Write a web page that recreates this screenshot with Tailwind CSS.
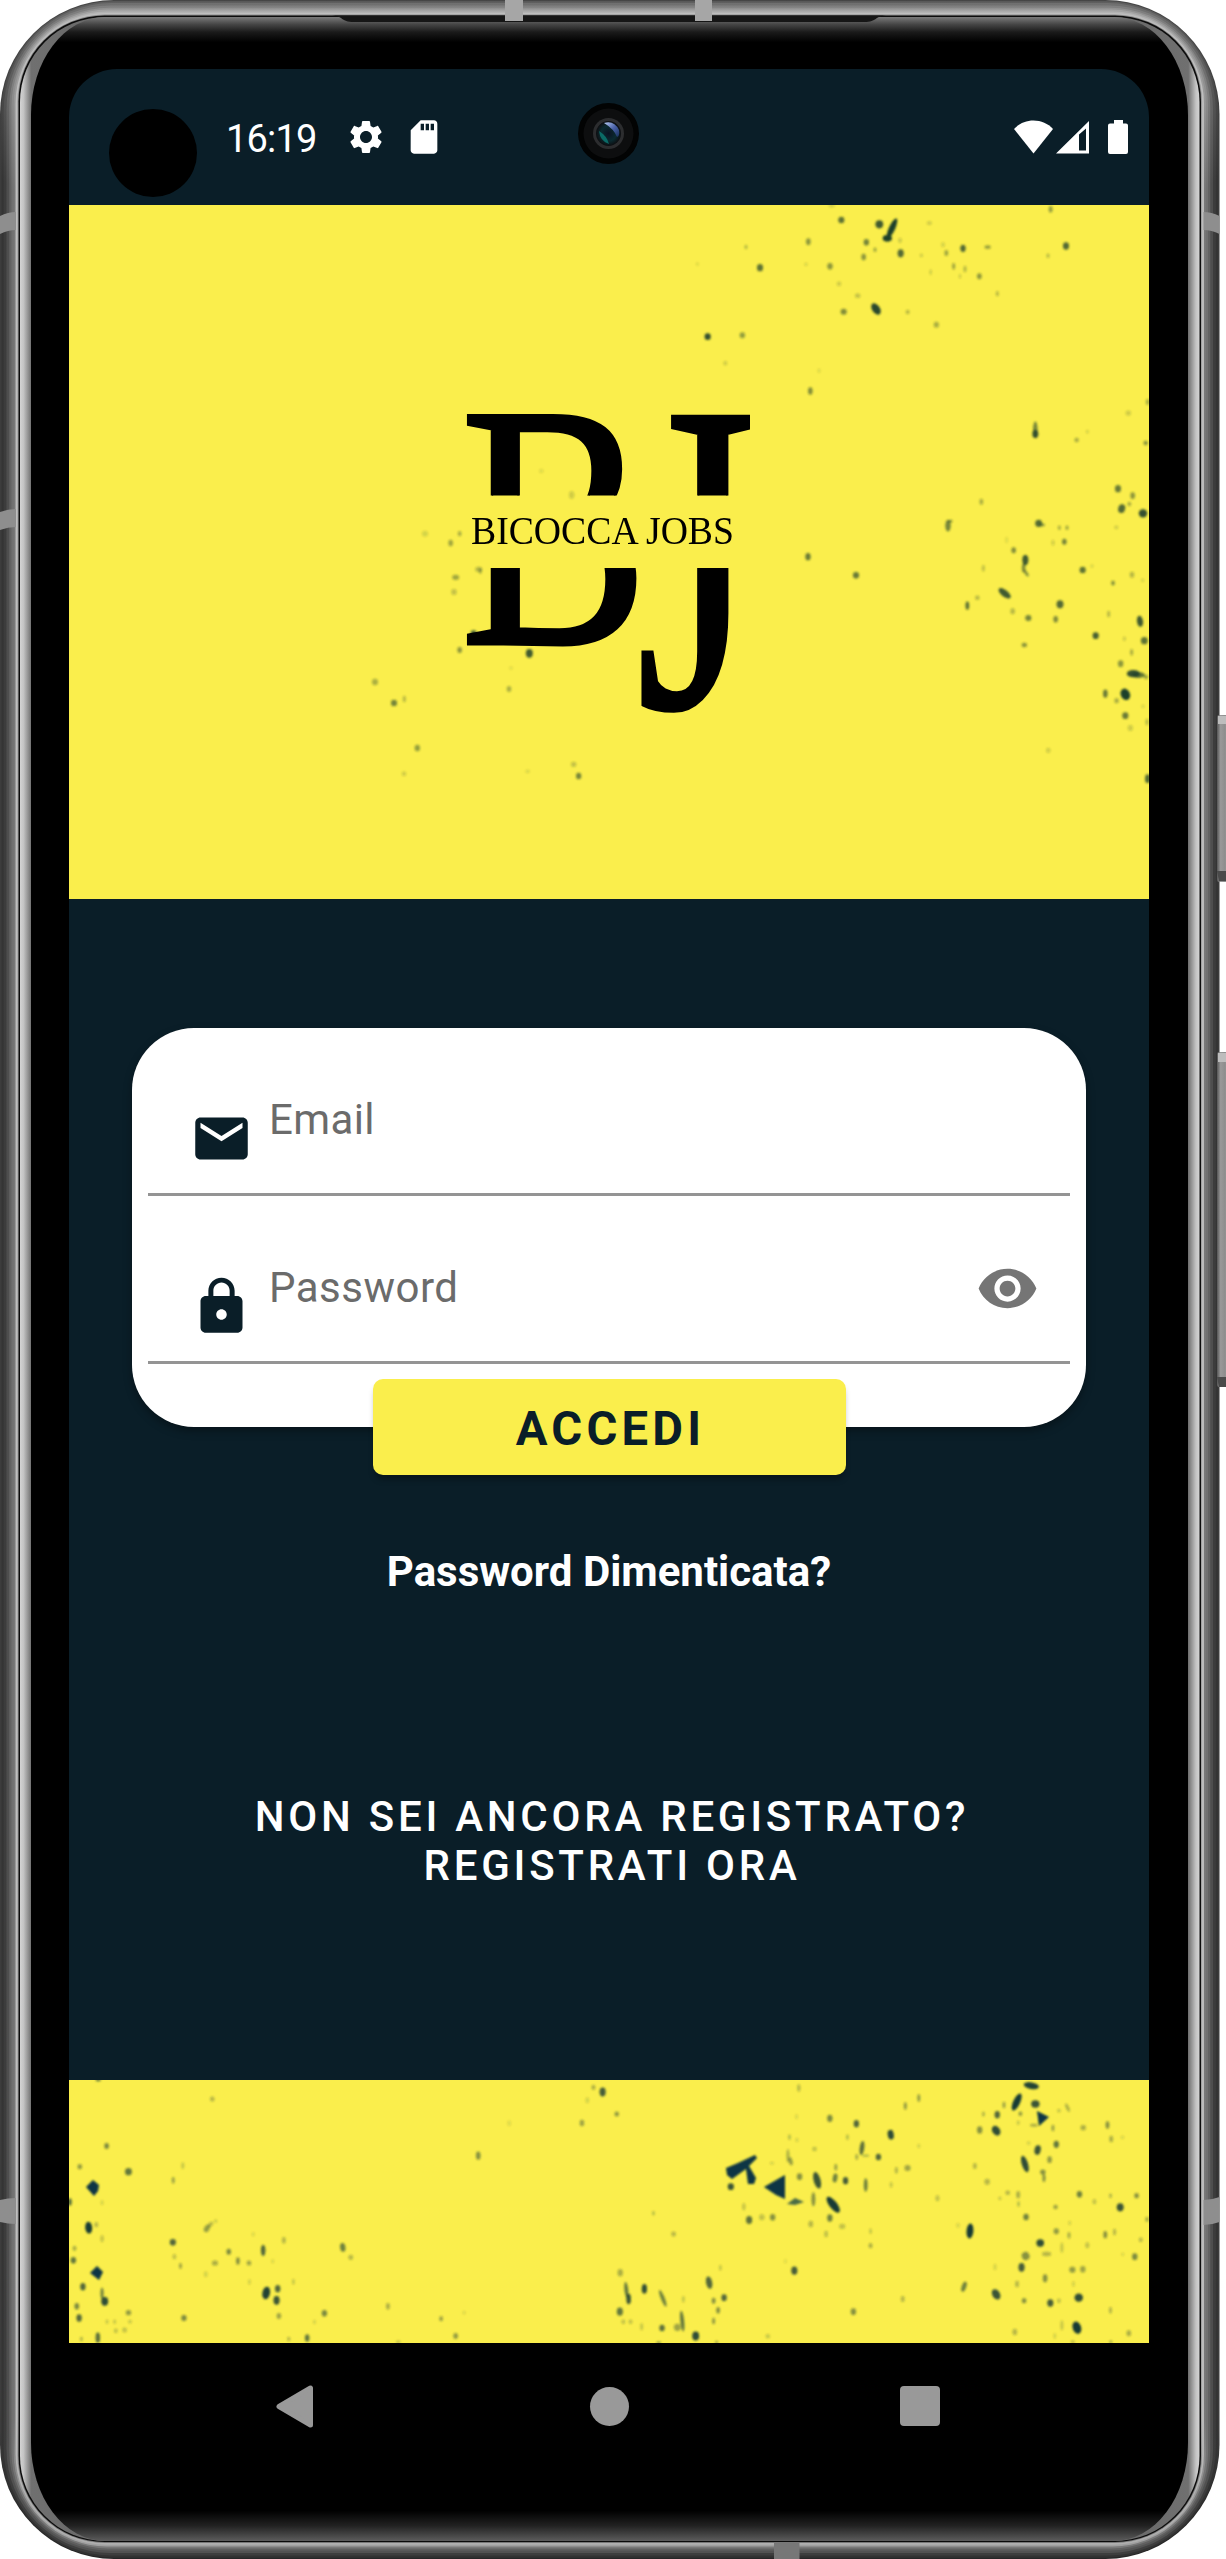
<!DOCTYPE html>
<html lang="it">
<head>
<meta charset="utf-8">
<title>Bicocca Jobs</title>
<script src="https://cdn.jsdelivr.net/npm/@tailwindcss/browser@4"></script>
</head>
<body class="bg-white font-[Roboto,sans-serif]">
<div class="relative w-[1226px] h-[2559px] overflow-hidden">

  <!-- Device frame -->
  <svg class="absolute inset-0" width="1226" height="2559" viewBox="0 0 1226 2559">
    <defs>
      <linearGradient id="rim" x1="20" x2="1199.5" y1="0" y2="0" gradientUnits="userSpaceOnUse">
        <stop offset="0" stop-color="#d4d4d4"/><stop offset=".003" stop-color="#c4c4c4"/><stop offset=".0095" stop-color="#707070"/>
        <stop offset=".5" stop-color="#333"/>
        <stop offset=".9905" stop-color="#707070"/><stop offset=".997" stop-color="#c4c4c4"/><stop offset="1" stop-color="#d4d4d4"/>
      </linearGradient>
      <linearGradient id="glass" x1="0" x2="0" y1="17" y2="2541" gradientUnits="userSpaceOnUse">
        <stop offset="0" stop-color="#7a7a7a"/><stop offset=".003" stop-color="#444"/><stop offset=".006" stop-color="#1a1a1a"/><stop offset=".010" stop-color="#000"/>
        <stop offset=".988" stop-color="#000"/><stop offset=".994" stop-color="#222"/><stop offset="1" stop-color="#5c5c5c"/>
      </linearGradient>
      <linearGradient id="key" x1="0" x2="1" y1="0" y2="0">
        <stop offset="0" stop-color="#555"/><stop offset=".3" stop-color="#999"/><stop offset=".7" stop-color="#8c8c8c"/><stop offset=".8" stop-color="#c8c8c8"/><stop offset="1" stop-color="#a8a8a8"/>
      </linearGradient>
    </defs>
    <g id="rings"></g>
    <rect x="18.5" y="15.5" width="1182.5" height="2526.5" rx="86" fill="#0c0c0c"/>
    <rect x="20" y="17" width="1179.5" height="2524" rx="85" fill="url(#rim)"/>
    <rect x="31" y="17" width="1157" height="2524" rx="74" ry="98" fill="url(#glass)"/>
    <path d="M332 15.500C344 16 340 22 354 22H864C878 22 874 16 886 15.500Z" fill="#161616"/>
    <g fill="#a6a6a6">
      <path d="M505 0h18v21h-18zM695 0h17v21h-17z"/>
      <path d="M0 216q8-4 16-4v18q-8 0-16 4zM0 512q8-3 16-3v18q-8 0-16 3zM0 2200q8-2 16-2v26q-8 0-16-2z" fill="#8e8e8e"/>
      <path d="M1219.500 216q-8-4-16-4v18q8 0 16 4zM1219.500 2197q-8 3-16 3v25q8 0 16-3z" fill="#8e8e8e"/>
      <path d="M774 2542h25.500v17H774z" fill="#777"/>
    </g>
    <rect x="1217" y="715" width="12" height="167" rx="2" fill="url(#key)"/>
    <path d="M1217 871h9v10h-7z" fill="#4a4a4a"/><path d="M1218 716h8v8h-8z" fill="#bdbdbd"/>
    <rect x="1217" y="1052" width="12" height="335" rx="2" fill="url(#key)"/>
    <path d="M1217 1377h9v10h-7z" fill="#4a4a4a"/><path d="M1218 1053h8v9h-8z" fill="#bdbdbd"/>
  </svg>

  <!-- Screen -->
  <main class="relative mt-[69px] ml-[69px] w-[1080px] h-[2400px] flex flex-col rounded-t-[48px] overflow-hidden bg-[#0a1e28]">

    <header class="relative flex items-center h-[136px] shrink-0 pl-10 pr-[21px] text-white">
      <div class="size-[88px] rounded-full bg-black mt-[31px]"></div>
      <span class="ml-[29px] mt-[3px] w-[120px] text-[38px] leading-none tracking-[-0.8px]">16:19</span>
      <svg class="size-10" viewBox="0 0 24 24" fill="currentColor"><path d="M19.140 12.940c.040-.300.060-.610.060-.940 0-.320-.020-.640-.070-.940l2.030-1.580c.180-.140.230-.410.120-.610l-1.920-3.320c-.120-.220-.370-.290-.590-.220l-2.390.960c-.500-.380-1.030-.700-1.620-.940L14.400 2.810c-.040-.240-.240-.410-.480-.410h-3.840c-.240 0-.430.170-.470.410l-.360 2.540c-.590.240-1.130.570-1.620.940l-2.390-.960c-.220-.080-.470 0-.590.220L2.740 8.870c-.120.210-.080.470.120.610l2.030 1.580c-.050.300-.090.630-.090.940s.020.640.070.940l-2.030 1.580c-.180.140-.230.410-.120.610l1.920 3.320c.120.220.370.290.590.220l2.390-.960c.500.380 1.030.700 1.620.940l.360 2.540c.050.240.240.410.480.410h3.840c.240 0 .440-.170.470-.410l.360-2.540c.590-.240 1.130-.560 1.620-.940l2.390.960c.220.080.470 0 .590-.220l1.920-3.320c.120-.220.070-.470-.120-.610l-2.010-1.580zM12 15.600c-1.980 0-3.600-1.620-3.600-3.600s1.620-3.600 3.600-3.600 3.600 1.620 3.600 3.600-1.620 3.600-3.600 3.600z"/></svg>
      <svg class="size-10 ml-[18px]" viewBox="0 0 24 24" fill="currentColor"><path d="M18 2h-8L4.020 8 4 20c0 1.100.900 2 2 2h12c1.100 0 2-.900 2-2V4c0-1.100-.900-2-2-2zm-6 6h-2V4h2v4zm3 0h-2V4h2v4zm3 0h-2V4h2v4z"/></svg>
      <svg class="ml-auto" width="39" height="34" viewBox="0 0 39 34" fill="currentColor"><path d="M0 9C5 3.500 12 0.500 19.500 0.500S34 3.500 39 9L19.500 33.500Z"/></svg>
      <svg class="ml-[3px]" width="33" height="34" viewBox="0 0 33 34" fill="currentColor"><path fill-rule="evenodd" d="M0 33.500 33 1V33.500ZM23 14.500V30.500H30V8.500Z"/></svg>
      <svg class="ml-[19px]" width="20" height="34" viewBox="0 0 20 34" fill="currentColor"><path d="M6 0h9v3.500h3q2 0 2 2V32q0 2-2 2H2q-2 0-2-2V5.500q0-2 2-2h4z"/></svg>
      <svg class="absolute left-[509px] top-[34px]" width="61" height="61" viewBox="0 0 61 61">
        <defs>
          <radialGradient id="lens"><stop offset="0" stop-color="#0b1222"/><stop offset=".6" stop-color="#0a2a30"/><stop offset="1" stop-color="#0d0d10"/></radialGradient>
          <linearGradient id="glint" x1="0" y1="0" x2="1" y2="1"><stop offset="0" stop-color="#b9cdf5"/><stop offset=".5" stop-color="#4b62a8"/><stop offset="1" stop-color="#17305c"/></linearGradient>
        </defs>
        <circle cx="30.500" cy="30.500" r="30.500" fill="#020303"/>
        <circle cx="30.500" cy="30.500" r="25" fill="#0d0e0f"/>
        <circle cx="30.500" cy="30.500" r="15.500" fill="#2c2d2f"/>
        <circle cx="30.500" cy="30.500" r="12.500" fill="url(#lens)"/>
        <path d="M26 20Q36 17 41 27 42 33 39 34 36 26 26 20Z" fill="url(#glint)"/>
        <path d="M21 28Q22 38 31 41 29 33 21 28Z" fill="#0b6a66"/>
      </svg>
    </header>

    <section class="relative h-[694px] shrink-0 bg-[#faee4c]">
      <svg class="absolute inset-0" width="1080" height="694" viewBox="69 205 1080 694">
        <defs><filter id="soft"><feGaussianBlur stdDeviation=".8"/></filter></defs>
        <g id="specksTop" fill="#1d3f2b" filter="url(#soft)"></g>
      </svg>
      <!-- Logo: monogram split by the name -->
      <svg class="relative left-0 ml-[391px] top-[204px]" width="290" height="310" viewBox="460 409 290 310" fill="#000">
        <defs><clipPath id="split"><path d="M460 409H750V495.500H460ZM460 568H750V719H460Z"/></clipPath></defs>
        <g clip-path="url(#split)">
          <text class="font-['Liberation_Serif']" transform="translate(460 644) scale(.812 1)" font-size="349" stroke="#000" stroke-width="3">B</text>
          <text class="font-['Liberation_Serif']" transform="translate(636 707) scale(.700 1)" font-size="444" stroke="#000" stroke-width="3">J</text>
        </g>
        <text class="font-['Liberation_Serif']" x="471" y="544" font-size="41" textLength="263" lengthAdjust="spacingAndGlyphs">BICOCCA JOBS</text>
      </svg>
    </section>

    <section class="flex flex-col h-[1181px] shrink-0 text-white">
      <div class="mt-[129px] mx-[63px] h-[399px] shrink-0 px-4 rounded-[62px] bg-white shadow-[0_4px_8px_rgba(0,0,0,0.35)] text-[#6b6b6b]">
        <label class="flex items-start h-[168px] pl-[42px] border-b-[3px] border-[#949494]">
          <svg class="size-[63px] mt-[79px]" viewBox="0 0 24 24" fill="#0a1e28"><path d="M20 4H4c-1.100 0-1.990.900-1.990 2L2 18c0 1.100.900 2 2 2h16c1.100 0 2-.900 2-2V6c0-1.100-.900-2-2-2zm0 4l-8 5-8-5V6l8 5 8-5v2z"/></svg>
          <span class="ml-4 mt-[67px] text-[42px] leading-[50px] tracking-[0.4px]">Email</span>
        </label>
        <label class="flex items-start h-[168px] pl-[42px] pr-[31px] border-b-[3px] border-[#949494]">
          <svg class="size-[63px] mt-[79px]" viewBox="0 0 24 24" fill="#0a1e28"><path d="M18 8h-1V6c0-2.760-2.240-5-5-5S7 3.240 7 6v2H6c-1.100 0-2 .900-2 2v10c0 1.100.900 2 2 2h12c1.100 0 2-.900 2-2V10c0-1.100-.900-2-2-2zm-6 9c-1.100 0-2-.900-2-2s.900-2 2-2 2 .900 2 2-.900 2-2 2zm3.100-9H8.900V6c0-1.710 1.390-3.100 3.100-3.100s3.100 1.390 3.100 3.100v2z"/></svg>
          <span class="ml-4 mt-[67px] text-[42px] leading-[50px] tracking-[0.5px]">Password</span>
          <svg class="size-[63px] ml-auto mt-[61px]" viewBox="0 0 24 24" fill="#757575"><path d="M12 4.500C7 4.500 2.730 7.610 1 12c1.730 4.390 6 7.500 11 7.500s9.270-3.110 11-7.500c-1.730-4.390-6-7.500-11-7.500zM12 17c-2.760 0-5-2.240-5-5s2.240-5 5-5 5 2.240 5 5-2.240 5-5 5zm0-8c-1.660 0-3 1.340-3 3s1.340 3 3 3 3-1.340 3-3-1.340-3-3-3z"/></svg>
        </label>
      </div>
      <button class="relative -mt-12 mx-auto w-[473px] h-24 shrink-0 pt-[5px] pl-[3px] rounded-[10px] bg-[#faee4c] shadow-[0_6px_6px_-2px_rgba(0,0,0,0.35)] text-[#0a1e28] text-[47.25px] font-bold tracking-[4.200px] leading-none">ACCEDI</button>
      <a class="mt-[72px] text-center text-[42px] leading-[49px] font-bold">Password Dimenticata?</a>
      <a class="mt-[196px] pl-[6px] text-center text-[42px] leading-[49px] font-medium tracking-[3.750px]">NON SEI ANCORA REGISTRATO?<br>REGISTRATI ORA</a>
    </section>

    <section class="h-[263px] shrink-0 bg-[#faee4c]">
      <svg width="1080" height="263" viewBox="69 2080 1080 263">
        <g id="specksBottom" fill="#173a34" filter="url(#soft)"></g>
        <g fill="#083444" filter="url(#soft)">
          <path d="M726 2168 738 2163 755 2155 757 2158 749 2166 756 2178 754 2184 748 2184 746 2169 732 2179 727 2175Z"/>
          <path d="M764 2187 785 2175 785 2199 776 2195Z"/>
          <path d="M1037 2111 1049 2117 1039 2126Z"/>
          <path d="M787 2204 795 2198 804 2202 795 2205Z" opacity=".7"/>
          <path d="M86 2187 93 2180 99 2185 98 2191 94 2196Z"/>
          <path d="M90 2273 97 2266 103 2272 99 2280Z"/>
        </g>
      </svg>
    </section>

    <nav class="flex items-center grow bg-black">
      <svg class="ml-[207px]" width="37" height="43" viewBox="0 0 37 43"><path d="M3 21.500 34.500 3V40Z" fill="#999" stroke="#999" stroke-width="5" stroke-linejoin="round"/></svg>
      <div class="ml-[277px] size-[39px] rounded-full bg-[#999]"></div>
      <div class="ml-[271px] size-10 rounded-[4px] bg-[#999]"></div>
    </nav>
  </main>
</div>

<script>
const NS = "http://www.w3.org/2000/svg";
const add = (parent, name, attrs) => {
  const el = document.createElementNS(NS, name);
  for (const k in attrs) el.setAttribute(k, attrs[k]);
  parent.appendChild(el);
  return el;
};

// Metal rim: nested rings as [depth 0..1, top, side, bottom] in grey levels
const rings = [[0,70,60,38],[.08,95,52,50],[.2,112,60,62],[.35,128,78,82],[.5,146,98,96],[.62,164,112,120],[.74,180,120,160],[.84,190,190,175],[.94,140,160,120]];
const holder = document.getElementById("rings");
rings.forEach(([d, t, s, b], i) => {
  const g = add(holder, "linearGradient", {id: "ring" + i, x1: 0, x2: 0, y1: 0, y2: 1});
  [[0, t], [.03, t * .6 + s * .4], [.07, s], [.95, s], [.985, b], [1, b]].forEach(([o, c]) => {
    const v = Math.round(c);
    add(g, "stop", {offset: o, "stop-color": `rgb(${v},${v},${v})`});
  });
  const x = 18.5 * d, y = 15.5 * d, yb = 17 * d;
  add(holder, "rect", {x, y, width: 1219.5 - 2 * x, height: 2559 - y - yb, rx: 114 - 28 * d, fill: `url(#ring${i})`});
});

// Speckles: groups of [x, y, rx, ry, opacity, rotation] with an origin and a scale
const speckle = (id, ox, oy, sx, sy, list) => {
  const g = document.getElementById(id);
  list.forEach(([x, y, rx, ry, o, r = 0]) => {
    const cx = ox + x / sx, cy = oy + y / sy;
    add(g, "ellipse", {cx, cy, rx: rx / 2.6, ry: ry / 2.7, opacity: o, transform: `rotate(${r} ${cx} ${cy})`});
  });
};
speckle("specksTop", 680, 200, 3, 3, [
  [484,60,8,9,.7],[598,73,10,11,.85],[636,85,8,29,1,25],[622,115,12,9,1],[385,125,6,9,.5],[198,141,4,6,.3],[240,203,8,10,.7],[559,127,7,9,.6],[585,149,4,6,.4],[551,171,6,9,.5],
  [450,199,7,9,.5],[662,160,8,11,.75],[748,69,7,5,.2],[660,121,5,7,.2],[789,134,5,7,.15],[799,159,5,8,.4],[849,145,7,10,.75],[923,141,8,5,.45],[724,166,4,5,.2],[821,199,4,9,.4],[855,207,4,9,.3],
  [898,229,6,8,.5],[752,217,3,8,.2],[840,229,3,6,.2],[952,281,4,7,.3],[1112,28,5,9,.45],[1158,138,8,10,.75],[1104,167,4,6,.3],[477,251,6,6,.2],[533,287,7,6,.25],[491,335,8,8,.55],[588,327,10,17,.95,-35],
  [683,336,5,6,.3],[769,374,7,8,.35],[83,410,8,9,.9],[187,406,7,8,.45],[136,490,5,6,.2],[391,573,6,10,.55],[417,512,4,6,.12],[52,192,4,5,.12],[378,193,4,5,.15],[455,17,8,4,.2],
  [1066,690,6,23,.6],[1066,702,8,11,.8],[1190,720,6,6,.35],[1222,695,4,5,.15],[1345,639,7,7,.2],[1403,606,5,8,.35],[1397,729,6,6,.5],[1314,866,8,10,.65],[1358,887,6,9,.5],[1348,912,5,6,.35],[1325,926,9,12,.75,15],[1389,940,11,11,.9],
  [904,905,5,8,.35],[804,977,7,16,.6],[811,964,6,4,.5],[1076,970,9,10,.75],[1087,975,7,4,.5],[1138,983,4,6,.35],[1161,983,4,6,.4],[1119,1028,4,8,.2],[1153,1025,6,8,.6],[1309,982,5,5,.2],[1001,1051,6,8,.55],[1036,1080,8,14,.85],[1031,1104,5,12,.55],[1039,1120,4,10,.5,-35],
  [910,1105,4,9,.25],[1208,1110,8,9,.7],[384,1070,7,10,.65],[528,1126,8,9,.65],[1356,1124,6,8,.3],[1236,1098,4,5,.15],[980,1020,4,9,.1]
]);
speckle("specksTop", 880, 500, 3, 3, [
  [699,249,5,7,.5],[788,241,4,5,.15],[374,280,19,9,.85,38],[262,317,5,11,.7],[292,293,6,6,.3],[398,334,6,8,.3],[445,354,8,8,.6],[540,313,9,11,.75],[527,358,6,9,.55],[433,435,7,6,.5],[686,342,4,9,.3],
  [647,407,8,9,.8],[733,416,4,6,.2],[780,364,8,15,.85,-8],[793,422,9,10,.7],[755,457,4,9,.35],[722,491,7,9,.5],[760,521,17,10,.9],[775,525,17,8,.7],[798,531,6,6,.4],[676,581,6,11,.65],[736,583,12,16,1,-25],[710,602,6,7,.35],[736,647,8,9,.65],
  [751,684,7,8,.2],[789,619,4,5,.15],[801,666,4,9,.3],[505,751,6,7,.18],[803,836,7,12,.75]
]);
speckle("specksTop", 340, 600, 3, 3, [
  [401,101,8,9,.8],[568,160,9,12,.85],[359,150,6,8,.5],[105,246,8,9,.35],[162,309,8,9,.6],[193,297,4,9,.3],[507,267,6,8,.35],[232,444,7,9,.45],[192,521,6,6,.2],[563,514,6,5,.12],[701,493,7,7,.25],[716,528,7,9,.6],[513,204,5,5,.1]
]);
speckle("specksTop", 420, 380, 3, 3, [
  [15,461,8,8,.15],[119,461,5,7,.35],[92,489,6,9,.4],[107,592,9,7,.4],[102,636,7,8,.25],[176,568,9,7,.3],[181,573,4,8,.35],[455,345,7,10,.2],[364,273,6,6,.1]
]);
speckle("specksBottom", 50, 2060, 2.613, 3, [
  [126,60,7,4,.6],[424,117,6,7,.3],[148,258,6,8,.55],[78,320,6,7,.45],[205,335,9,10,.65],[347,317,4,9,.2],[322,361,4,9,.4],[52,426,5,10,.7],[136,428,4,7,.15],[101,503,9,16,1,-5],[121,494,5,7,.3],[136,536,4,9,.25],[64,565,5,7,.35],[61,601,7,9,.65],
  [86,680,7,10,.75],[136,700,4,15,.6],[143,724,9,12,.9],[70,739,6,9,.55],[76,774,7,10,.75],[205,758,7,7,.45],[149,785,4,6,.2],[169,785,4,6,.2],[209,785,5,5,.2],[172,812,5,6,.25],[195,810,6,7,.25],[125,833,6,14,.7],[82,837,4,6,.3],[350,774,7,8,.55],
  [410,505,7,11,.45,30],[420,493,5,8,.3,40],[433,483,4,5,.2],[321,547,8,9,.75],[325,590,5,7,.25],[341,618,4,8,.4],[467,575,6,8,.55],[431,609,8,7,.35],[491,603,5,10,.5],[520,609,6,7,.4],[531,523,4,6,.12],[557,571,6,15,.75],[611,541,5,9,.3],[582,604,4,6,.12],
  [407,643,5,8,.15],[521,666,4,8,.15],[636,665,4,8,.2],[565,699,10,17,.95,12],[595,686,7,10,.75],[592,721,8,12,.85],[598,768,6,8,.4],[717,760,7,9,.55],[672,834,6,10,.65],[624,837,4,6,.3],[691,786,4,6,.15],[765,562,7,12,.6,-8],[786,592,6,7,.3],[883,739,5,9,.35],
  [1022,776,5,7,.4],[1060,828,6,8,.45],[1082,758,4,5,.12],[910,846,6,4,.25],[1119,287,6,11,.5],[1200,190,5,8,.1],[1444,96,8,12,.8],[1420,82,5,7,.35],[1404,121,5,8,.15],[1481,162,6,7,.45],[1390,189,6,9,.4],
  [1490,638,7,10,.35],[1506,690,5,22,.65,-6],[1512,717,6,14,.85],[1489,755,8,11,.65],[1553,687,7,13,.75],[1498,785,5,6,.25],[1517,785,5,6,.25],[1546,800,4,10,.2]
]);
speckle("specksBottom", 640, 2060, 2.676, 3, [
  [425,84,4,10,.3],[710,138,4,10,.45],[746,114,4,10,.45],[508,175,7,10,.55],[579,191,7,10,.75],[671,224,8,13,.9,-10],[419,170,4,7,.12],[400,232,4,8,.25],[555,232,4,8,.25],[420,240,4,6,.15],[467,267,6,6,.25],[594,264,6,19,.7,8],[604,287,9,3,.3],[580,291,4,8,.35],
  [638,291,7,9,.75],[396,287,4,18,.35],[403,304,5,11,.45,-15],[716,324,8,8,.4],[686,331,4,9,.3],[746,258,4,6,.15],[672,374,4,8,.2],[524,322,4,9,.4],[522,354,6,12,.6,10],[550,362,7,10,.8],[604,375,5,18,.6],[427,350,7,9,.5],[474,361,9,23,.85,-15],[464,418,5,19,.5],
  [517,434,10,26,1,-38],[243,380,8,9,.85],[278,440,4,10,.25],[292,480,8,11,.7],[326,472,7,8,.25],[355,472,7,9,.5],[508,474,7,10,.6],[541,499,8,7,.25],[457,492,6,9,.3],[498,522,5,9,.25],[617,514,4,8,.2],[617,557,5,7,.35],[353,310,6,4,.15],[796,415,5,8,.25],
  [36,460,4,6,.25],[90,522,6,7,.3],[215,623,4,8,.2],[413,632,8,11,.8],[389,604,4,6,.1],[703,717,5,8,.3],[571,755,7,9,.5],[342,829,6,6,.2],[185,668,8,17,.75,-12],[12,685,6,12,.6],[61,715,5,24,.6,-22],[225,713,7,9,.75],[197,722,5,8,.5],[116,718,4,9,.2],[209,751,5,9,.5],[197,783,4,9,.45],
  [113,783,5,28,.65,-6],[100,802,9,10,.4],[59,804,7,9,.7],[149,828,9,12,.9],[50,848,6,3,.5],[205,847,4,4,.4],
  [1047,77,20,9,.95,10],[1008,126,9,25,1,25],[1058,132,11,10,.85],[956,164,7,10,.75],[919,162,4,7,.3],[974,135,4,9,.4],[1018,161,5,6,.45],[1012,188,4,6,.2],[1054,196,10,4,.35],[909,210,7,10,.5],[953,212,10,14,.9,-35],[1105,204,4,9,.4],[1144,143,4,12,.35,-25],[1121,152,5,5,.2],
  [1186,203,7,7,.35],[1251,195,5,10,.5],[1261,237,5,9,.35],[1291,232,5,5,.12],[1114,253,7,10,.65],[1064,270,8,13,.85,12],[1040,249,5,5,.15],[1096,299,6,9,.45],[1030,312,8,23,.9,-18],[1078,336,7,7,.5],[1081,354,4,11,.5],[896,318,5,8,.3],[929,365,7,8,.3],[984,398,6,6,.3],[963,415,4,5,.2],
  [1012,404,5,10,.35],[1013,432,4,8,.25],[1176,403,7,9,.6],[1112,441,6,6,.4],[1216,425,5,7,.25],[1259,407,4,6,.3],[1329,407,6,7,.5],[1285,442,9,11,.85],[1033,471,7,9,.6],[1357,478,5,7,.35],[1150,489,4,6,.15],[883,513,9,20,1,5],[851,496,5,7,.12],[1114,514,7,8,.45],[1148,526,4,9,.35],
  [1245,524,5,10,.5],[1270,516,4,9,.3],[1340,539,5,6,.3],[1071,549,10,10,.9],[1197,556,5,8,.25],[1129,563,4,14,.2],[1088,582,12,6,.3],[1032,588,10,11,.5,-30],[1324,590,7,9,.55],[1292,583,4,5,.12],[950,621,4,9,.15],[1021,622,8,12,.8],[1157,629,8,8,.45],[1185,628,7,9,.4],
  [1084,655,6,11,.5],[867,680,6,14,.6,20],[1009,672,5,9,.3],[1160,672,4,8,.15],[953,703,10,15,.85,-30],[1028,722,6,7,.5],[1098,729,8,10,.8],[1121,722,5,6,.25],[1174,713,11,11,.9],[1259,751,4,9,.3],[1169,803,11,17,1,-18],[1129,796,4,14,.2],[1003,816,6,9,.3],[1308,820,6,8,.35],[1110,828,4,8,.15],[1158,846,5,4,.3],[1260,846,4,4,.4]
]);
</script>
</body>
</html>
